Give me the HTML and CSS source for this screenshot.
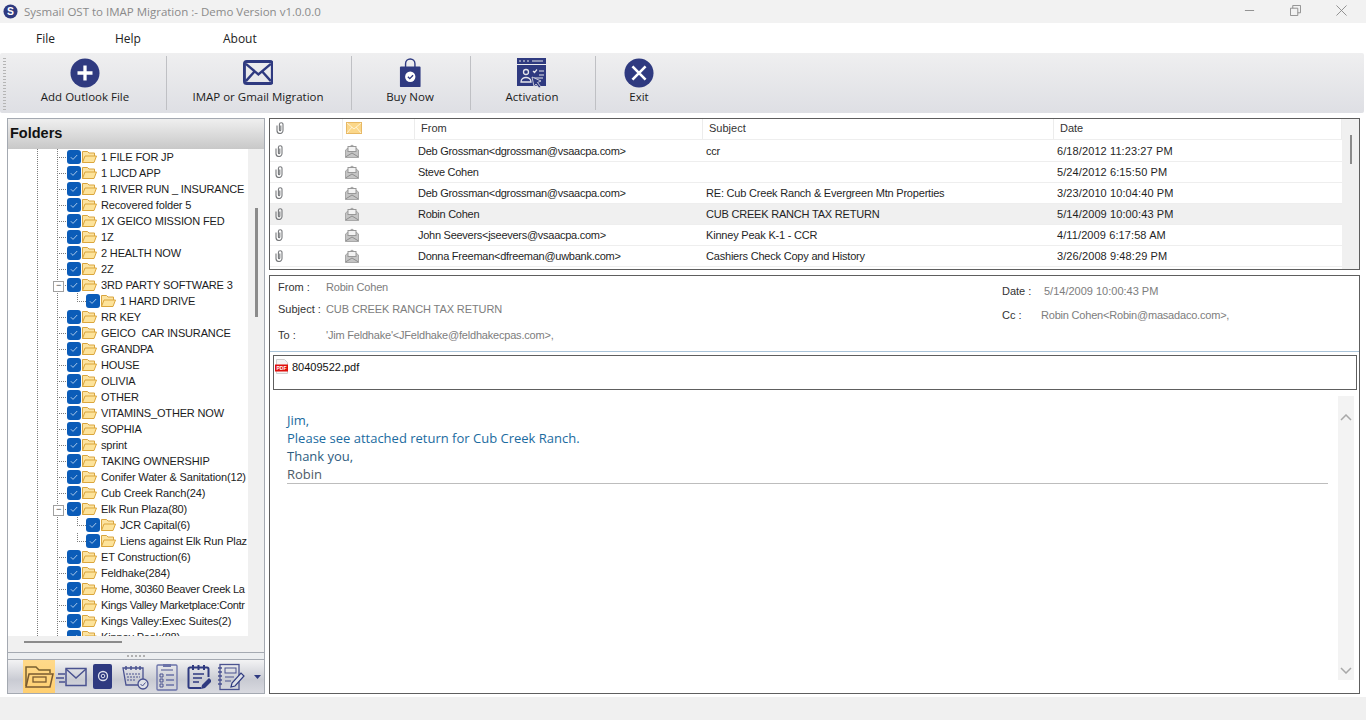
FILE: index.html
```html
<!DOCTYPE html>
<html lang="en">
<head>
  <meta charset="UTF-8">
  <title>Sysmail OST to IMAP Migration</title>
  <link rel="stylesheet" href="styles.css">
</head>
<body>
  <svg class="defs" width="0" height="0">
    <symbol id="i-check" viewBox="0 0 14 14">
      <rect width="14" height="14" rx="3" fill="#0b5cb8"/>
      <path d="M3.800 7.200l2.200 2.200 4.200-4.400" fill="none" stroke="#a9c8ea" stroke-width="1"/>
    </symbol>
    <symbol id="i-folder" viewBox="0 0 16 14">
      <path d="M1.500 12.500V1.500h5l1.500 1.500h5.500V6" fill="#fce3a0" stroke="#d9a53f"/>
      <path d="M1.500 12.500L4 6h11.500l-2.500 6.500z" fill="#fde39a" stroke="#dba63c"/>
    </symbol>
    <symbol id="i-clip" viewBox="0 0 8 12">
      <path d="M1 3.500v5a3 3 0 0 0 6 0V2.500a1.800 1.800 0 0 0-3.600 0v5.500a.7.700 0 0 0 1.400 0V3.500" fill="none" stroke="#77797c" stroke-width="1.100"/>
    </symbol>
    <symbol id="i-read" viewBox="0 0 14 14">
      <path d="M.5 6L7 1l6.500 5v7.500H.5z" fill="#c4c4c4" stroke="#a8a8a8"/>
      <rect x="3" y="2.500" width="8" height="5" fill="#f2f2f2" stroke="#989898"/>
      <path d="M.5 13L7 9l6.500 4" fill="none" stroke="#8e8e8e"/>
    </symbol>
  </svg>

  <header class="titlebar">
    <svg class="app-logo" viewBox="0 0 16 16">
      <circle cx="8" cy="8" r="7.500" fill="#2f3a80"/>
      <text x="8" y="11.500" text-anchor="middle" class="app-logo-s">S</text>
    </svg>
    <span class="app-title">Sysmail OST to IMAP Migration :- Demo Version v1.0.0.0</span>
    <div class="win-btns">
      <svg viewBox="0 0 12 12" class="win-min"><path d="M1 6h10" stroke="#8a8a8a"/></svg>
      <svg viewBox="0 0 12 12" class="win-max"><path d="M.5 3.500h8v8h-8zM3 3.500V.5h8.500v8H8.500" fill="none" stroke="#8a8a8a"/></svg>
      <svg viewBox="0 0 12 12" class="win-close"><path d="M.5.5l11 11M11.500.5l-11 11" stroke="#8a8a8a"/></svg>
    </div>
  </header>

  <nav class="menubar">
    <a class="menu-file">File</a>
    <a class="menu-help">Help</a>
    <a class="menu-about">About</a>
  </nav>

  <div class="toolbar">
    <div class="grip"></div>
    <button class="tool tool-add">
      <svg viewBox="0 0 32 32" class="tool-icon"><circle cx="16" cy="16" r="15.500" fill="#2f3a80"/><path d="M16 8v16M8 16h16" stroke="#fff" stroke-width="3.500"/></svg>
      Add Outlook File
    </button>
    <button class="tool tool-imap">
      <svg viewBox="0 0 32 26" class="tool-icon"><rect x="1.500" y="1.500" width="29" height="23" rx="2.500" fill="none" stroke="#2f3a80" stroke-width="3"/><path d="M3 4l13 11L29 4M3 22l9-10M29 22l-9-10" fill="none" stroke="#2f3a80" stroke-width="2.500"/></svg>
      IMAP or Gmail Migration
    </button>
    <button class="tool tool-buy">
      <svg viewBox="0 0 24 32" class="tool-icon"><path d="M7 11V6a5 5 0 0 1 10 0v5" fill="none" stroke="#2f3a80" stroke-width="1.500"/><path d="M2 9h20a1 1 0 0 1 1 1v20a1 1 0 0 1-1 1H2a1 1 0 0 1-1-1V10a1 1 0 0 1 1-1z" fill="#2f3a80"/><circle cx="12" cy="20" r="5.500" fill="#fff"/><path d="M9.500 20l2 2 3.500-3.500" fill="none" stroke="#2f3a80" stroke-width="1.500"/></svg>
      Buy Now
    </button>
    <button class="tool tool-act">
      <svg viewBox="0 0 30 30" class="tool-icon"><rect width="29" height="6" fill="#2f3a80"/><rect y="7" width="29" height="21" fill="#2f3a80"/><path d="M2 3h2M6 3h2M10 3h2M15 3h11" stroke="#e6e6ea"/><circle cx="9" cy="14" r="2.500" fill="none" stroke="#e6e6ea" stroke-width="1.300"/><path d="M4 24c0-6 10-6 10 0z" fill="none" stroke="#e6e6ea" stroke-width="1.300"/><path d="M16 13l1.500 1.500 2.500-3M22 13h5M22 17h5M17 20h9" fill="none" stroke="#e6e6ea" stroke-width="1.200"/><path d="M15 19l9 4-3.500 1.500L24 29l-2 1-3-4-2 2.500z" fill="#2f3a80" stroke="#e6e6ea" stroke-width=".8"/></svg>
      Activation
    </button>
    <button class="tool tool-exit">
      <svg viewBox="0 0 32 32" class="tool-icon"><circle cx="16" cy="16" r="15.500" fill="#2f3a80"/><path d="M9 9l14 14M23 9L9 23" stroke="#fff" stroke-width="2.800"/></svg>
      Exit
    </button>
  </div>

  <main class="workspace">
    <aside class="folders">
      <h2 class="folders-head">Folders</h2>
      <div class="tree-wrap">
        <div class="tree">
          <div class="node"><svg class="chk"><use href="#i-check"/></svg><svg class="fld"><use href="#i-folder"/></svg><span>1 FILE FOR JP</span></div>
          <div class="node"><svg class="chk"><use href="#i-check"/></svg><svg class="fld"><use href="#i-folder"/></svg><span>1 LJCD APP</span></div>
          <div class="node"><svg class="chk"><use href="#i-check"/></svg><svg class="fld"><use href="#i-folder"/></svg><span>1 RIVER RUN _ INSURANCE</span></div>
          <div class="node"><svg class="chk"><use href="#i-check"/></svg><svg class="fld"><use href="#i-folder"/></svg><span>Recovered folder 5</span></div>
          <div class="node"><svg class="chk"><use href="#i-check"/></svg><svg class="fld"><use href="#i-folder"/></svg><span>1X GEICO MISSION FED</span></div>
          <div class="node"><svg class="chk"><use href="#i-check"/></svg><svg class="fld"><use href="#i-folder"/></svg><span>1Z</span></div>
          <div class="node"><svg class="chk"><use href="#i-check"/></svg><svg class="fld"><use href="#i-folder"/></svg><span>2 HEALTH NOW</span></div>
          <div class="node"><svg class="chk"><use href="#i-check"/></svg><svg class="fld"><use href="#i-folder"/></svg><span>2Z</span></div>
          <div class="node open"><svg class="chk"><use href="#i-check"/></svg><svg class="fld"><use href="#i-folder"/></svg><span>3RD PARTY SOFTWARE 3</span></div>
          <div class="node child"><svg class="chk"><use href="#i-check"/></svg><svg class="fld"><use href="#i-folder"/></svg><span>1 HARD DRIVE</span></div>
          <div class="node"><svg class="chk"><use href="#i-check"/></svg><svg class="fld"><use href="#i-folder"/></svg><span>RR KEY</span></div>
          <div class="node"><svg class="chk"><use href="#i-check"/></svg><svg class="fld"><use href="#i-folder"/></svg><span>GEICO&nbsp; CAR INSURANCE</span></div>
          <div class="node"><svg class="chk"><use href="#i-check"/></svg><svg class="fld"><use href="#i-folder"/></svg><span>GRANDPA</span></div>
          <div class="node"><svg class="chk"><use href="#i-check"/></svg><svg class="fld"><use href="#i-folder"/></svg><span>HOUSE</span></div>
          <div class="node"><svg class="chk"><use href="#i-check"/></svg><svg class="fld"><use href="#i-folder"/></svg><span>OLIVIA</span></div>
          <div class="node"><svg class="chk"><use href="#i-check"/></svg><svg class="fld"><use href="#i-folder"/></svg><span>OTHER</span></div>
          <div class="node"><svg class="chk"><use href="#i-check"/></svg><svg class="fld"><use href="#i-folder"/></svg><span>VITAMINS_OTHER NOW</span></div>
          <div class="node"><svg class="chk"><use href="#i-check"/></svg><svg class="fld"><use href="#i-folder"/></svg><span>SOPHIA</span></div>
          <div class="node"><svg class="chk"><use href="#i-check"/></svg><svg class="fld"><use href="#i-folder"/></svg><span>sprint</span></div>
          <div class="node"><svg class="chk"><use href="#i-check"/></svg><svg class="fld"><use href="#i-folder"/></svg><span>TAKING OWNERSHIP</span></div>
          <div class="node"><svg class="chk"><use href="#i-check"/></svg><svg class="fld"><use href="#i-folder"/></svg><span>Conifer Water &amp; Sanitation(12)</span></div>
          <div class="node"><svg class="chk"><use href="#i-check"/></svg><svg class="fld"><use href="#i-folder"/></svg><span>Cub Creek Ranch(24)</span></div>
          <div class="node open"><svg class="chk"><use href="#i-check"/></svg><svg class="fld"><use href="#i-folder"/></svg><span>Elk Run Plaza(80)</span></div>
          <div class="node child"><svg class="chk"><use href="#i-check"/></svg><svg class="fld"><use href="#i-folder"/></svg><span>JCR Capital(6)</span></div>
          <div class="node child"><svg class="chk"><use href="#i-check"/></svg><svg class="fld"><use href="#i-folder"/></svg><span>Liens against Elk Run Plaz</span></div>
          <div class="node"><svg class="chk"><use href="#i-check"/></svg><svg class="fld"><use href="#i-folder"/></svg><span>ET Construction(6)</span></div>
          <div class="node"><svg class="chk"><use href="#i-check"/></svg><svg class="fld"><use href="#i-folder"/></svg><span>Feldhake(284)</span></div>
          <div class="node tight"><svg class="chk"><use href="#i-check"/></svg><svg class="fld"><use href="#i-folder"/></svg><span>Home, 30360 Beaver Creek La</span></div>
          <div class="node tight"><svg class="chk"><use href="#i-check"/></svg><svg class="fld"><use href="#i-folder"/></svg><span>Kings Valley Marketplace:Contr</span></div>
          <div class="node"><svg class="chk"><use href="#i-check"/></svg><svg class="fld"><use href="#i-folder"/></svg><span>Kings Valley:Exec Suites(2)</span></div>
          <div class="node"><svg class="chk"><use href="#i-check"/></svg><svg class="fld"><use href="#i-folder"/></svg><span>Kinney Peak(88)</span></div>
        </div>
        <div class="tree-vscroll"><div class="tree-vthumb"></div></div>
      </div>
      <div class="tree-hscroll"><div class="tree-hthumb"></div></div>
      <div class="splitter"><span></span></div>
      <div class="nav-icons">
        <div class="nav-icon active">
          <svg viewBox="0 0 30 26" width="30" height="26"><path d="M2 22V3h10l3 3h11v3" fill="none" stroke="#7a6030" stroke-width="1.500"/><path d="M2 23l3-13h24l-3 13z" fill="none" stroke="#7a5a30" stroke-width="1.500"/><rect x="9" y="13" width="13" height="5" fill="none" stroke="#7a5a30" stroke-width="1.300"/></svg>
        </div>
        <div class="nav-icon">
          <svg viewBox="0 0 32 24" width="32" height="24"><rect x="11" y="3.500" width="20" height="17" fill="none" stroke="#4a5290" stroke-width="1.500"/><path d="M11 4l10 9 10-9" fill="none" stroke="#4a5290" stroke-width="1.500"/><path d="M3 9h7M1 13h8M4 17h6" stroke="#4a5290" stroke-width="1.500"/></svg>
        </div>
        <div class="nav-icon">
          <svg viewBox="0 0 20 26" width="20" height="26"><rect width="19" height="25" rx="2" fill="#2f3a80"/><circle cx="10" cy="12" r="4.500" fill="none" stroke="#dfe2ee" stroke-width="1.300"/><circle cx="10" cy="12" r="1.800" fill="none" stroke="#dfe2ee"/></svg>
        </div>
        <div class="nav-icon">
          <svg viewBox="0 0 30 28" width="30" height="28"><path d="M3 5h20v17H6z" fill="none" stroke="#4a5290" stroke-width="1.300"/><path d="M6 3v4M11 3v4M16 3v4M20 3v4" stroke="#4a5290" stroke-width="1.500"/><path d="M6 11h14M7 14h13M7 17h9" stroke="#4a5290" stroke-dasharray="2 1"/><circle cx="23" cy="21" r="5" fill="#dfe1e8" stroke="#4a5290" stroke-width="1.300"/><path d="M20.500 21l2 2 3-3.500" fill="none" stroke="#4a5290"/></svg>
        </div>
        <div class="nav-icon">
          <svg viewBox="0 0 22 28" width="22" height="28"><rect x="1" y="2" width="20" height="25" rx="1" fill="none" stroke="#6a72a8" stroke-width="1.300"/><rect x="7" y="1" width="8" height="3" fill="#6a72a8"/><path d="M5 7h12" stroke="#4a5290"/><path d="M4 11h3v3H4zM4 16h3v3H4zM4 21h3v3H4z" fill="none" stroke="#4a5290"/><path d="M10 12h8M10 17h8M10 22h8" stroke="#6a72a8" stroke-width="1.500"/></svg>
        </div>
        <div class="nav-icon">
          <svg viewBox="0 0 24 26" width="24" height="26"><path d="M14 24H3a1.500 1.500 0 0 1-1.500-1.500V5A1.500 1.500 0 0 1 3 3.500h17A1.500 1.500 0 0 1 21.500 5v8" fill="none" stroke="#2f3a80" stroke-width="2"/><path d="M6 1v5M11.500 1v5M17 1v5" stroke="#2f3a80" stroke-width="2"/><path d="M6 10h11M6 14h9M6 18h6" stroke="#2f3a80" stroke-width="1.500"/><path d="M14 25l1-4 7-7 3 3-7 7z" fill="#2f3a80"/></svg>
        </div>
        <div class="nav-icon">
          <svg viewBox="0 0 28 28" width="28" height="28"><rect x="3" y="1.500" width="19" height="25" fill="none" stroke="#4a5290" stroke-width="1.300"/><path d="M1 5h4M1 9h4M1 13h4M1 17h4M1 21h4" stroke="#4a5290" stroke-width="1.300"/><rect x="8" y="5" width="11" height="5" fill="none" stroke="#4a5290"/><path d="M8 14h9M8 18h6" stroke="#4a5290"/><path d="M14 24l1-4 9-10 3 3-9 10z" fill="#dfe1e8" stroke="#2f3a80" stroke-width="1.200"/></svg>
        </div>
        <svg class="nav-more" viewBox="0 0 7 4" width="7" height="4"><path d="M0 0h7L3.500 4z" fill="#2f3a80"/></svg>
      </div>
    </aside>

    <section class="content">
      <div class="mail-list">
        <div class="list-head">
          <div class="lh-cell"><svg class="clip"><use href="#i-clip"/></svg></div>
          <div class="lh-cell">
            <svg viewBox="0 0 16 12" width="16" height="12"><rect x=".5" y=".5" width="15" height="11" fill="#fbd78a" stroke="#e7b864"/><path d="M1 1l7 6 7-6M1 11l5-6M15 11l-5-6" fill="none" stroke="#fff3d6"/></svg>
          </div>
          <div class="lh-cell lh-text">From</div>
          <div class="lh-cell lh-text">Subject</div>
          <div class="lh-cell lh-text">Date</div>
        </div>
        <div class="list-body">
          <div class="list-rows">
            <div class="mail-row"><svg class="clip"><use href="#i-clip"/></svg><svg class="read"><use href="#i-read"/></svg><span class="col-from">Deb Grossman&lt;dgrossman@vsaacpa.com&gt;</span><span class="col-subject">ccr</span><span class="col-date">6/18/2012 11:23:27 PM</span></div>
            <div class="mail-row"><svg class="clip"><use href="#i-clip"/></svg><svg class="read"><use href="#i-read"/></svg><span class="col-from">Steve Cohen</span><span class="col-subject"></span><span class="col-date">5/24/2012 6:15:50 PM</span></div>
            <div class="mail-row"><svg class="clip"><use href="#i-clip"/></svg><svg class="read"><use href="#i-read"/></svg><span class="col-from">Deb Grossman&lt;dgrossman@vsaacpa.com&gt;</span><span class="col-subject">RE: Cub Creek Ranch &amp; Evergreen Mtn Properties</span><span class="col-date">3/23/2010 10:04:40 PM</span></div>
            <div class="mail-row selected"><svg class="clip"><use href="#i-clip"/></svg><svg class="read"><use href="#i-read"/></svg><span class="col-from">Robin Cohen</span><span class="col-subject">CUB CREEK RANCH TAX RETURN</span><span class="col-date">5/14/2009 10:00:43 PM</span></div>
            <div class="mail-row"><svg class="clip"><use href="#i-clip"/></svg><svg class="read"><use href="#i-read"/></svg><span class="col-from">John Seevers&lt;jseevers@vsaacpa.com&gt;</span><span class="col-subject">Kinney Peak K-1 - CCR</span><span class="col-date">4/11/2009 6:17:58 AM</span></div>
            <div class="mail-row"><svg class="clip"><use href="#i-clip"/></svg><svg class="read"><use href="#i-read"/></svg><span class="col-from">Donna Freeman&lt;dfreeman@uwbank.com&gt;</span><span class="col-subject">Cashiers Check Copy and History</span><span class="col-date">3/26/2008 9:48:29 PM</span></div>
          </div>
        </div>
        <div class="list-scroll"><div class="list-thumb"></div></div>
      </div>

      <div class="mail-view">
        <div class="mail-meta">
          <div class="meta-left">
            <div class="meta-row meta-from"><label>From :</label><span>Robin Cohen</span></div>
            <div class="meta-row meta-subject"><label>Subject :</label><span>CUB CREEK RANCH TAX RETURN</span></div>
            <div class="meta-row meta-to"><label>To :</label><span>'Jim Feldhake'&lt;JFeldhake@feldhakecpas.com&gt;,</span></div>
          </div>
          <div class="meta-right">
            <div class="meta-row meta-date"><label>Date :</label><span>5/14/2009 10:00:43 PM</span></div>
            <div class="meta-row meta-cc"><label>Cc :</label><span>Robin Cohen&lt;Robin@masadaco.com&gt;,</span></div>
          </div>
        </div>
        <div class="attachments">
          <svg viewBox="0 0 14 15" width="14" height="15"><path d="M1.500.5h8l3 3V14.500h-11z" fill="#f4f4f4" stroke="#cfcfcf"/><rect y="5.500" width="13" height="7" fill="#e0100c"/><text x="6.500" y="11" text-anchor="middle" class="pdf-tag">PDF</text></svg>
          <span>80409522.pdf</span>
        </div>
        <div class="mail-body">
          <div class="body-text">
            <p class="line-a">Jim,</p>
            <p class="line-b">Please see attached return for Cub Creek Ranch.</p>
            <p class="line-c">Thank you,</p>
            <p class="line-d">Robin</p>
            <hr class="sig-rule">
          </div>
          <div class="body-scroll">
            <svg viewBox="0 0 12 7" width="12" height="7"><path d="M1 6l5-5 5 5" fill="none" stroke="#a8a8a8" stroke-width="1.500"/></svg>
            <svg viewBox="0 0 12 7" width="12" height="7"><path d="M1 1l5 5 5-5" fill="none" stroke="#a8a8a8" stroke-width="1.500"/></svg>
          </div>
        </div>
      </div>
    </section>
  </main>

  <footer class="statusbar"></footer>
</body>
</html>
```

FILE: styles.css
```css
* {
  box-sizing: border-box;
  margin: 0;
  padding: 0;
}

html, body {
  height: 720px;
  overflow: hidden;
}

body {
  font-family: "Liberation Sans", Arial, sans-serif;
  font-size: 11px;
  color: #1a1a1a;
  background: #fff;
  display: flex;
  flex-direction: column;
}

.defs {
  position: absolute;
}

/* title + menu */
.titlebar {
  height: 23px;
  background: #f2f2f2;
  display: flex;
  align-items: center;
  padding-left: 3px;
}

.app-logo {
  width: 15px;
  height: 15px;
}

.app-logo-s {
  font: bold 11px "Liberation Sans", sans-serif;
  fill: #fff;
}

.app-title {
  font-family: "Open Sans", sans-serif;
  font-size: 11.5px;
  color: #8a8a8a;
  margin-left: 6px;
}

.win-btns {
  margin-left: auto;
  display: flex;
  align-items: center;
  padding: 0 19px 2px 0;
  gap: 35px;
}

.win-btns svg {
  width: 11px;
  height: 11px;
}

.menubar {
  height: 30px;
  background: #fff;
  display: flex;
  align-items: center;
  font-family: "Open Sans", sans-serif;
  font-size: 12px;
  color: #222;
}

.menu-file { margin-left: 36px; }
.menu-help { margin-left: 60px; }
.menu-about { margin-left: 82px; }

/* toolbar */
.toolbar {
  height: 60px;
  margin-right: 2px;
  background: linear-gradient(#efeff0, #dedfe4);
  border-radius: 2px;
  display: flex;
  align-items: stretch;
  padding: 3px 0 3px 3px;
}

.grip {
  width: 3px;
  margin: 2px 0 0;
  background: repeating-linear-gradient(#b5b5b5 0 1px, transparent 1px 3px);
}

.tool {
  background: none;
  border: none;
  border-right: 1px solid #bfc0c4;
  font-family: "Open Sans", sans-serif;
  font-size: 11.5px;
  color: #1c1c1c;
  display: flex;
  flex-direction: column;
  align-items: center;
  justify-content: flex-end;
  padding: 0 2px 6px 0;
  gap: 1px;
}

.tool-icon {
  display: block;
  height: 30px;
}

.tool-add { width: 161px; }
.tool-imap { width: 185px; }
.tool-imap .tool-icon { height: 25px; margin-bottom: 3px; }
.tool-buy { width: 119px; }
.tool-act { width: 125px; }
.tool-exit { width: 88px; border-right: none; }

/* main area */
.workspace {
  height: 584px;
  background: #fff;
  padding: 5px 6px 3px 7px;
  display: flex;
  gap: 4px;
}

.folders {
  width: 258px;
  border: 1px solid #a4a9b1;
  background: #f0f0f0;
  display: flex;
  flex-direction: column;
}

.folders-head {
  height: 30px;
  flex: none;
  font-size: 14.5px;
  line-height: 28px;
  padding-left: 2px;
  color: #111;
  background: linear-gradient(#efefef, #c8c8c8);
}

.tree-wrap {
  height: 487px;
  flex: none;
  display: flex;
  background: #f0f0f0;
  overflow: hidden;
}

.tree {
  width: 240px;
  background:
    repeating-linear-gradient(#7d7d7d 0 1px, transparent 1px 2px) 29px 0 / 1px 100% no-repeat,
    repeating-linear-gradient(#7d7d7d 0 1px, transparent 1px 2px) 49px 0 / 1px 100% no-repeat,
    #fff;
  overflow: hidden;
}

.node {
  height: 16px;
  display: flex;
  align-items: center;
  padding-left: 59px;
  position: relative;
  white-space: nowrap;
  color: #1c1c1c;
  letter-spacing: -.15px;
}

.node.tight {
  letter-spacing: -.3px;
}

.node::before {
  content: "";
  position: absolute;
  left: 49px;
  width: 10px;
  top: 8px;
  height: 1px;
  background: repeating-linear-gradient(90deg, #7d7d7d 0 1px, transparent 1px 2px);
}

.node.open::after {
  content: "−";
  position: absolute;
  left: 45px;
  top: 4px;
  width: 9px;
  height: 9px;
  border: 1px solid #a0a0a0;
  background: #fff;
  font-size: 9px;
  line-height: 7px;
  text-align: center;
  color: #444;
}

.node.child {
  padding-left: 78px;
  background: repeating-linear-gradient(#7d7d7d 0 1px, transparent 1px 2px) 69px 0 / 1px 9px no-repeat;
}

.node.child::before {
  left: 69px;
}

.chk {
  width: 14px;
  height: 14px;
  flex: none;
}

.fld {
  width: 16px;
  height: 14px;
  flex: none;
  margin-right: 4px;
}

.tree-vscroll {
  flex: 1;
  background: #f0f0f0;
  position: relative;
}

.tree-vthumb {
  position: absolute;
  left: 7px;
  top: 59px;
  width: 3px;
  height: 109px;
  background: #8b8b8b;
}

.tree-hscroll {
  height: 16px;
  flex: none;
  padding: 5px 0 0 16px;
  background: #f0f0f0;
}

.tree-hthumb {
  width: 98px;
  height: 2px;
  background: #8b8b8b;
}

.splitter {
  height: 8px;
  flex: none;
  border-top: 1px solid #a4a9b1;
  border-bottom: 1px solid #a4a9b1;
  background: #eceef0;
  display: flex;
  justify-content: center;
  align-items: center;
}

.splitter span {
  width: 18px;
  height: 2px;
  background: repeating-linear-gradient(90deg, #b0b0b0 0 2px, transparent 2px 4px);
}

.nav-icons {
  flex: 1;
  display: flex;
  align-items: center;
  padding-left: 15px;
  background: linear-gradient(#f3f3f4, #c9cbd3 60%, #d9dae0);
}

.nav-icon {
  width: 32px;
  height: 100%;
  display: flex;
  align-items: center;
  justify-content: center;
}

.nav-icon.active {
  background: linear-gradient(#ffd98a, #ffcf70);
}

.nav-more {
  margin: 1px 0 0 7px;
}

/* right side */
.content {
  flex: 1;
  min-width: 0;
  display: flex;
  flex-direction: column;
  gap: 5px;
}

.mail-list {
  height: 152px;
  flex: none;
  border: 1px solid #5e5e5e;
  background: #fff;
  display: grid;
  grid-template-columns: 1fr 17px;
  grid-template-rows: 22px 1fr;
  overflow: hidden;
}

.list-head,
.mail-row {
  display: grid;
  grid-template-columns: 73px 72px 288px 351px 1fr;
  align-items: center;
}

.list-head {
  height: 21px;
  border-bottom: 1px solid #eee;
}

.lh-cell {
  height: 100%;
  border-right: 1px solid #ececec;
  padding: 0 0 2px 6px;
  display: flex;
  align-items: center;
}

.lh-cell:nth-child(2) {
  padding-left: 3px;
}

.lh-text {
  padding-left: 6px;
  color: #333;
}

.clip {
  width: 8px;
  height: 12px;
  flex: none;
}

.read {
  width: 14px;
  height: 14px;
}

.list-body {
  grid-column: 1;
  overflow: hidden;
}

.list-rows {
  height: 126px;
}

.mail-row {
  height: 21px;
  border-bottom: 1px solid #eee;
  white-space: nowrap;
  color: #1f1f1f;
}

.mail-row .clip {
  margin-left: 5px;
}

.mail-row .read {
  margin-left: 2px;
}

.mail-row span {
  padding-left: 3px;
  overflow: hidden;
}

.col-from { letter-spacing: -.27px; }
.col-subject { letter-spacing: -.2px; }
.col-date { letter-spacing: .1px; }

.mail-row.selected {
  background: #f0f0f0;
}

.list-scroll {
  grid-column: 2;
  grid-row: 1 / 3;
  background: #f0f0f0;
  padding: 16px 0 0 8px;
}

.list-thumb {
  width: 2px;
  height: 29px;
  background: #8b8b8b;
}

.mail-view {
  flex: 1;
  min-height: 0;
  border: 1px solid #5e5e5e;
  display: flex;
  flex-direction: column;
  background: #fff;
}

.mail-meta {
  height: 76px;
  flex: none;
  border-bottom: 1px solid #a9c3d8;
  display: flex;
  color: #333;
}

.meta-left {
  width: 732px;
  padding-left: 8px;
}

.meta-right {
  flex: 1;
}

.meta-row {
  display: flex;
  white-space: nowrap;
  line-height: 14px;
}

.meta-row span {
  color: #7d7d7d;
  letter-spacing: -.2px;
}

.meta-row label {
  width: 48px;
}

.meta-from { margin-top: 4px; }
.meta-subject { margin-top: 8px; }
.meta-subject span { letter-spacing: -.1px; }
.meta-to { margin-top: 12px; }
.meta-date { margin-top: 8px; }
.meta-date span { letter-spacing: 0; }
.meta-cc { margin-top: 10px; }
.meta-date label { width: 42px; }
.meta-cc label { width: 39px; }

.attachments {
  height: 35px;
  flex: none;
  margin: 3px 2px 0 3px;
  border: 1px solid #5e5e5e;
  padding: 3px 0 0 1px;
  display: flex;
  gap: 3px;
  align-items: flex-start;
  color: #111;
}

.attachments span {
  margin-top: 2px;
}

.pdf-tag {
  font: bold 5px "Liberation Sans", sans-serif;
  fill: #fff;
}

.mail-body {
  flex: 1;
  min-height: 0;
  display: flex;
  margin-top: 6px;
}

.body-text {
  flex: 1;
  padding: 15px 10px 0 17px;
  font-family: "Open Sans", sans-serif;
  font-size: 13px;
  line-height: 18px;
}

.line-a, .line-b { color: #1b6ba0; }
.line-c { color: #2e5c80; }
.line-d { color: #4e5c68; }

.sig-rule {
  border: none;
  border-top: 1px solid #bdbdbd;
  margin-top: 0;
}

.body-scroll {
  width: 16px;
  flex: none;
  margin-right: 5px;
  background: #f3f3f3;
  height: 284px;
  display: flex;
  flex-direction: column;
  justify-content: space-between;
  align-items: center;
  padding: 18px 0 6px;
}

.statusbar {
  flex: 1;
  background: #f0f0f0;
}
```
